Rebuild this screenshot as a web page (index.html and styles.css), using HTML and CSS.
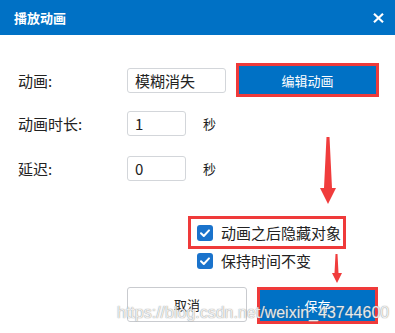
FILE: index.html
```html
<!DOCTYPE html>
<html lang="zh-CN">
<head>
<meta charset="utf-8">
<link rel="stylesheet" href="styles.css">
</head>
<body>
<div class="dialog">
  <div class="titlebar">
    <span class="title">播放动画</span>
    <svg class="close" width="11" height="10" viewBox="0 0 11 10"><path d="M1 0.8 L10 9.2 M10 0.8 L1 9.2" stroke="#fff" stroke-width="2.2" fill="none"/></svg>
  </div>
  <div class="content">
    <div class="row row1">
      <span class="label">动画:</span>
      <div class="input wide">模糊消失</div>
      <button class="btn primary marked edit">编辑动画</button>
    </div>
    <div class="row row2">
      <span class="label">动画时长:</span>
      <div class="input narrow">1</div>
      <span class="unit">秒</span>
    </div>
    <div class="row row3">
      <span class="label">延迟:</span>
      <div class="input narrow">0</div>
      <span class="unit">秒</span>
    </div>
    <div class="options">
      <label class="option marked-box">
        <span class="check"><svg width="16" height="16" viewBox="0 0 16 16"><path d="M4 8.2 L6.8 11 L12 5.4" stroke="#fff" stroke-width="2" fill="none" stroke-linecap="round" stroke-linejoin="round"/></svg></span>
        <span class="otext">动画之后隐藏对象</span>
      </label>
      <label class="option plain">
        <span class="check"><svg width="16" height="16" viewBox="0 0 16 16"><path d="M4 8.2 L6.8 11 L12 5.4" stroke="#fff" stroke-width="2" fill="none" stroke-linecap="round" stroke-linejoin="round"/></svg></span>
        <span class="otext">保持时间不变</span>
      </label>
    </div>
    <div class="actions">
      <button class="btn secondary">取消</button>
      <button class="btn primary marked save">保存</button>
    </div>
  </div>
  <svg class="arrows" width="395" height="333" viewBox="0 0 395 333">
    <polygon points="326.5,137 329.5,137 332,188 336,188 328,204 320,188 324,188" fill="#f03c3c"/>
    <polygon points="335.5,254 337.5,254 338.5,273 342,273 337,283 332,273 334.5,273" fill="#f03c3c"/>
  </svg>
  <div class="watermark">https://blog.csdn.net/weixin_43744600</div>
</div>
</body>
</html>
```
FILE: styles.css
```css
* { box-sizing: border-box; }
html, body { margin: 0; padding: 0; background: #fff; }
body { font-family: "Noto Sans CJK SC", "Noto Sans", sans-serif; color: #222; }

.dialog {
  position: relative;
  width: 395px;
  height: 333px;
  overflow: hidden;
  background: #fff;
}

.titlebar {
  height: 35px;
  background: #0071c5;
  display: flex;
  align-items: center;
  justify-content: space-between;
  padding: 0 11px 0 14px;
}
.title {
  color: #fff;
  font-size: 13px;
  font-weight: bold;
  line-height: 1;
}
.close { display: block; }

.content {
  padding: 28px 0 0 18px;
}

.row {
  display: flex;
  align-items: center;
}
.row1 { height: 34px; }
.row2 { height: 25px; margin-top: 14px; }
.row3 { height: 25px; margin-top: 20px; }

.label {
  width: 109px;
  font-size: 15px;
  line-height: 1;
  color: #222;
}

.input {
  height: 25px;
  border: 1px solid #d3d6da;
  border-radius: 3px;
  font-size: 15px;
  line-height: 23px;
  padding-left: 7px;
  color: #222;
  font-family: "Noto Sans CJK SC", "Liberation Sans", sans-serif;
}
.input.wide { width: 99px; }
.input.narrow { width: 59px; }

.unit {
  margin-left: 17px;
  font-size: 13px;
  line-height: 1;
}

.btn {
  font-family: "Noto Sans CJK SC", sans-serif;
  font-size: 13px;
  padding: 0;
  margin: 0;
  cursor: pointer;
}
.btn.primary {
  background: #0071c5;
  color: #fff;
}
.btn.marked {
  border: 3px solid #ef3a3a;
}
.btn.edit {
  margin-left: 10px;
  width: 143px;
  height: 34px;
}
.btn.secondary {
  background: #fff;
  color: #222;
  border: 1px solid #c9cbcf;
  border-radius: 3px;
  width: 120px;
  height: 35px;
}
.btn.save {
  width: 121px;
  height: 37px;
  margin-left: 10px;
}

.options {
  margin-top: 35px;
  margin-left: 170px;
  display: flex;
  flex-direction: column;
  align-items: flex-start;
}
.option {
  display: flex;
  align-items: center;
  font-size: 15px;
  line-height: 1;
}
.option.marked-box {
  height: 33px;
  width: 158px;
  border: 3px solid #ef3a3a;
  padding-left: 6px;
}
.option.plain {
  height: 23px;
  padding-left: 9px;
}
.check {
  width: 16px;
  height: 16px;
  border-radius: 3px;
  background: #1a73cc;
  display: flex;
  flex-shrink: 0;
}
.otext {
  margin-left: 8px;
  color: #222;
}

.actions {
  display: flex;
  align-items: flex-start;
  margin-top: 15px;
  margin-left: 109px;
}

.arrows {
  position: absolute;
  left: 0;
  top: 0;
  pointer-events: none;
}

.watermark {
  position: absolute;
  left: 117px;
  top: 303px;
  font-family: "Liberation Sans", Arial, sans-serif;
  font-size: 16px;
  line-height: 19px;
  color: rgba(255, 255, 255, 0.85);
  text-shadow: 0 0 1px rgba(120, 120, 120, 0.7), 0 0 1px rgba(120, 120, 120, 0.5);
  white-space: nowrap;
  pointer-events: none;
}
```
